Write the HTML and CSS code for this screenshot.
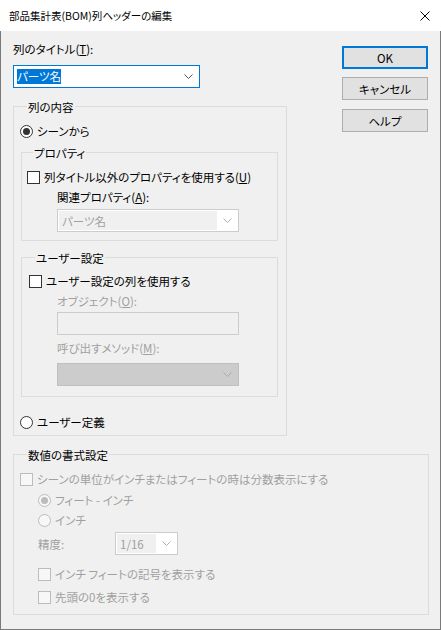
FILE: index.html
```html
<!DOCTYPE html>
<html lang="ja">
<head>
    <meta charset="UTF-8">
    <title>部品集計表(BOM)列ヘッダーの編集</title>
    <link rel="stylesheet" href="styles.css">
</head>
<body>
<div class="window">
    <!-- title bar -->
    <div class="titlebar">
        <span class="title">部品集計表(BOM)列ヘッダーの編集</span>
        <svg class="close" width="10" height="10" viewBox="0 0 10 10">
            <path d="M0.5 0.5 L9.5 9.5 M9.5 0.5 L0.5 9.5" stroke="#000" stroke-width="1" fill="none"/>
        </svg>
    </div>

    <div class="client">
        <div class="top">
            <div class="left">
                <div class="label caption">列のタイトル(<u>T</u>):</div>
                <div class="combo combo-title">
                    <span class="field"><span class="sel">パーツ名</span></span>
                    <span class="arrow">
                        <svg width="9" height="6" viewBox="0 0 9 6"><path d="M0.5 0.5 L4.5 4.5 L8.5 0.5" stroke="#555" fill="none"/></svg>
                    </span>
                </div>

                <!-- 列の内容 -->
                <div class="group g-content">
                    <div class="group-title">列の内容</div>
                    <div class="row r-scene"><span class="radio checked"></span>シーンから</div>

                    <div class="group sub g-prop">
                        <div class="group-title">プロパティ</div>
                        <div class="row r-usep"><span class="check"></span>列タイトル以外のプロパティを使用する(<u>U</u>)</div>
                        <div class="row indent">関連プロパティ(<u>A</u>):</div>
                        <div class="combo combo-dis indent c-related">
                            <span class="field">パーツ名</span>
                            <span class="arrow">
                                <svg width="9" height="6" viewBox="0 0 9 6"><path d="M0.5 0.5 L4.5 4.5 L8.5 0.5" stroke="#b0b0b0" fill="none"/></svg>
                            </span>
                        </div>
                    </div>

                    <div class="group sub g-user">
                        <div class="group-title">ユーザー設定</div>
                        <div class="row r-useu"><span class="check"></span>ユーザー設定の列を使用する</div>
                        <div class="row indent disabled">オブジェクト(<u>O</u>):</div>
                        <div class="textbox indent"></div>
                        <div class="row indent disabled r-method">呼び出すメソッド(<u>M</u>):</div>
                        <div class="dropdown indent">
                            <svg width="9" height="6" viewBox="0 0 9 6"><path d="M0.5 0.5 L4.5 4.5 L8.5 0.5" stroke="#a8a8a8" fill="none"/></svg>
                        </div>
                    </div>

                    <div class="row r-custom"><span class="radio"></span>ユーザー定義</div>
                </div>
            </div>

            <div class="buttons">
                <button class="btn default">OK</button>
                <button class="btn">キャンセル</button>
                <button class="btn btn-help">ヘルプ</button>
            </div>
        </div>

        <!-- 数値の書式設定 -->
        <div class="group g-number">
            <div class="group-title">数値の書式設定</div>
            <div class="row disabled r-frac"><span class="check dis"></span>シーンの単位がインチまたはフィートの時は分数表示にする</div>
            <div class="row disabled n-indent r-feet"><span class="radio dis checked"></span>フィート - インチ</div>
            <div class="row disabled n-indent"><span class="radio dis"></span>インチ</div>
            <div class="row disabled n-indent r-prec">
                <span class="prec-label">精度:</span>
                <div class="combo combo-dis c-prec">
                    <span class="field">1/16</span>
                    <span class="arrow">
                        <svg width="9" height="6" viewBox="0 0 9 6"><path d="M0.5 0.5 L4.5 4.5 L8.5 0.5" stroke="#b0b0b0" fill="none"/></svg>
                    </span>
                </div>
            </div>
            <div class="row disabled n-indent r-sym"><span class="check dis"></span>インチ フィートの記号を表示する</div>
            <div class="row disabled n-indent r-zero"><span class="check dis"></span>先頭の0を表示する</div>
        </div>
    </div>
</div>
</body>
</html>
```

FILE: styles.css
```css
* {
    box-sizing: border-box;
}
body {
    margin: 0;
    font-family: "Noto Sans CJK JP", "Noto Sans", sans-serif;
    font-size: 11.5px;
    line-height: 16px;
    font-feature-settings: "palt";
    color: #000;
    background: #f0f0f0;
}
u {
    text-decoration-thickness: 1px;
    text-underline-offset: 1px;
}
.window {
    width: 441px;
    height: 630px;
    background: #f0f0f0;
    border: 1px solid #7a7a7a;
    border-top: none;
    display: flex;
    flex-direction: column;
}
.titlebar {
    height: 31px;
    background: #fff;
    display: flex;
    align-items: center;
    padding-left: 9px;
    margin: 0 -1px;
    padding-right: 11px;
}
.title {
    flex: 1;
    font-size: 10.5px;
}
.client {
    padding: 0 11px 0 12px;
}
.top {
    display: flex;
    justify-content: space-between;
}
.left {
    width: 274px;
}
.caption {
    margin-top: 10px;
}

/* combo boxes */
.combo {
    display: flex;
    height: 23px;
    background: #fff;
    border: 1px solid #ccc;
}
.combo .field {
    flex: 1;
    display: flex;
    align-items: center;
}
.combo .arrow {
    width: 20px;
    display: flex;
    align-items: center;
    justify-content: center;
}
.combo-title {
    width: 187px;
    margin-top: 8px;
    border-color: #0078d7;
}
.combo-title .field {
    padding-left: 3px;
}
.combo-title .arrow {
    width: 21px;
}
.sel {
    background: #0078d7;
    color: #fff;
    line-height: 15px;
}
.combo-dis {
    padding: 1px;
    color: #a0a0a0;
}
.combo-dis .field {
    background: #f0f0f0;
    padding-left: 3px;
}
.c-related {
    width: 182px;
    margin-top: 2px;
}
.c-prec {
    width: 63px;
}
.prec-label {
    width: 77px;
}
.textbox {
    width: 182px;
    height: 23px;
    margin-top: 1px;
    border: 1px solid #ccc;
    background: #f0f0f0;
}
.dropdown {
    width: 182px;
    height: 23px;
    margin-top: 5px;
    background: #ccc;
    border: 1px solid #bfbfbf;
    display: flex;
    align-items: center;
    justify-content: flex-end;
    padding-right: 6px;
}

/* group boxes */
.group {
    border: 1px solid #dcdcdc;
}
.group-title {
    width: fit-content;
    margin: -8px 0 0 7px;
    padding: 0 1px;
    background: #f0f0f0;
}
.g-content {
    margin-top: 18px;
    padding: 0 0 3px 6px;
}
.sub {
    width: 257px;
    margin-left: 1px;
}
.sub .group-title {
    margin-left: 6px;
}
.g-prop {
    margin-top: 11px;
    padding: 0 0 8px 5px;
}
.g-user {
    margin-top: 16px;
    padding: 0 0 10px 7px;
}
.g-user .indent {
    margin-left: 28px;
}
.g-number {
    margin-top: 18px;
    padding: 0 0 7px 6px;
}

/* rows, radios, checks */
.row {
    display: flex;
    align-items: center;
    height: 20px;
    white-space: nowrap;
}
.indent {
    margin-left: 30px;
}
.disabled {
    color: #a0a0a0;
}
.r-scene {
    margin-top: 6px;
}
.r-usep {
    margin-top: 6px;
}
.r-useu {
    margin-top: 5px;
}
.r-method {
    margin-top: 3px;
}
.r-custom {
    margin-top: 15px;
}
.radio, .check {
    width: 13px;
    height: 13px;
    border: 1px solid #333;
    background: #fff;
    margin-right: 4px;
    flex: none;
    display: flex;
    align-items: center;
    justify-content: center;
}
.radio {
    border-radius: 50%;
}
.radio.checked::after {
    content: "";
    width: 7px;
    height: 7px;
    border-radius: 50%;
    background: #333;
}
.radio.dis, .check.dis {
    border-color: #bcbcbc;
    background: #f7f7f7;
}
.radio.dis.checked::after {
    background: #bcbcbc;
}
.r-frac {
    margin-top: 6px;
}
.n-indent {
    margin-left: 18px;
}
.r-feet {
    margin-top: 1px;
}
.r-prec {
    height: 23px;
    margin-top: 2px;
}
.r-sym {
    margin-top: 9px;
}
.r-zero {
    margin-top: 3px;
}

/* buttons */
.buttons {
    width: 87px;
    display: flex;
    flex-direction: column;
    padding-top: 15px;
}
.btn {
    width: 86px;
    height: 23px;
    margin-bottom: 8px;
    padding: 0;
    font: inherit;
    font-feature-settings: "palt";
    color: #000;
    background: #e1e1e1;
    border: 1px solid #adadad;
}
.btn.default {
    border: 2px solid #0078d7;
}
.btn-help {
    margin-top: 1px;
}
```
